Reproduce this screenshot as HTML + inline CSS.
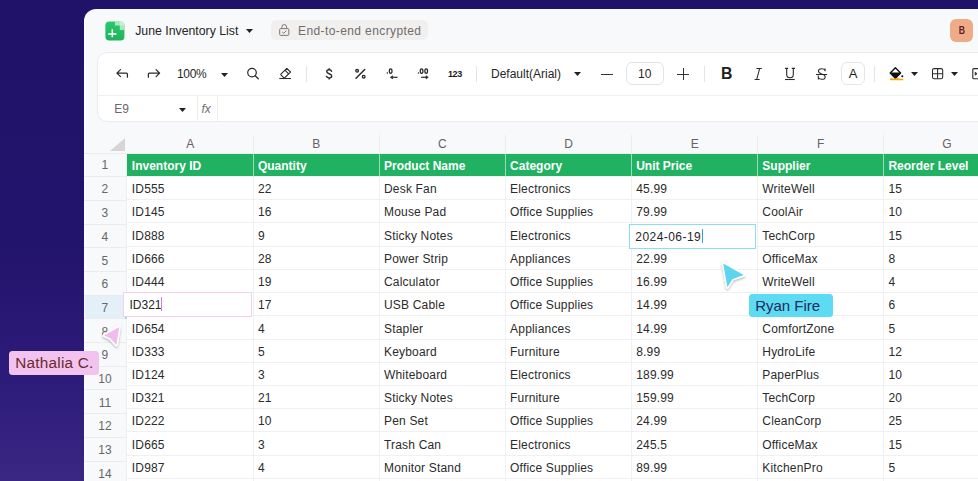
<!DOCTYPE html>
<html><head><meta charset="utf-8"><title>June Inventory List</title>
<style>
html,body{margin:0;padding:0}
body{width:978px;height:481px;overflow:hidden;position:relative;font-family:"Liberation Sans", sans-serif;
background:linear-gradient(180deg,#201268 0%,#22136c 50%,#2d1b79 78%,#3a2784 100%)}
.a,.t{position:absolute}
.t{white-space:nowrap}
#win{position:absolute;left:84px;top:8.8px;width:1000px;height:520px;background:#f8f9fb;border-top-left-radius:12px}
#panel{position:absolute;left:97.2px;top:52.2px;width:1000px;height:69.8px;box-sizing:border-box;background:#fff;border:1px solid #ebebee;border-radius:10px}
</style></head><body>
<div id="win"></div>
<div class="a" style="left:84.6px;top:22px;width:1.8px;height:470px;background:#fdfdfe"></div>
<svg class="a" style="left:105px;top:20.5px" width="20" height="20" viewBox="0 0 20 20">
<defs><linearGradient id="lg" x1="0" y1="0" x2="0" y2="1"><stop offset="0" stop-color="#2cc96c"/><stop offset="1" stop-color="#1fb25e"/></linearGradient></defs>
<rect x="0.4" y="0.5" width="19" height="19" rx="3.8" fill="url(#lg)"/>
<path d="M10 0.5H15.6A3.8 3.8 0 0 1 19.4 4.3V9.1H14.8V4.5H10Z" fill="#c8f0d7" opacity="0.8"/>
<rect x="14.8" y="0.5" width="4.6" height="4" fill="#e9faef" opacity="0.5"/>
<path d="M7.3 8.3v7.9M3.2 12.9h8.2" stroke="#fff" stroke-width="1.5"/>
</svg>
<div class="t" style="left:135.20px;top:20.64px;font-size:12.3px;line-height:20px;font-weight:400;color:#262626;">June Inventory List</div>
<svg class="a" style="left:245.5px;top:29px" width="7" height="4" viewBox="0 0 7 4"><path d="M0 0h7L3.5 4z" fill="#222"/></svg>
<div class="a" style="left:271px;top:20.3px;width:156.5px;height:19.4px;border-radius:5px;background:#f2f0ee"></div>
<svg class="a" style="left:276px;top:22px" width="16" height="16" viewBox="276 22 16 16">
<path d="M281.9 28.6V26.9A2.35 2.35 0 0 1 286.6 26.9V28.6" fill="none" stroke="#7a7a7a" stroke-width="1"/>
<rect x="279.7" y="28.6" width="9.1" height="6.8" rx="0.9" fill="none" stroke="#7a7a7a" stroke-width="1"/>
<path d="M282.1 31.9L283.7 33.3L286.4 30.6" fill="none" stroke="#7a7a7a" stroke-width="1"/>
</svg>
<div class="t" style="left:298.00px;top:20.64px;font-size:12px;line-height:20px;font-weight:400;color:#6e6e6e;letter-spacing:0.4px">End-to-end encrypted</div>
<div class="a" style="left:950.2px;top:18.8px;width:23px;height:23px;border-radius:6px;background:#efab85"></div>
<div class="t" style="left:951.70px;width:20px;text-align:center;top:20.13px;font-size:11px;line-height:20px;font-weight:700;color:#5a1f30;transform:scaleX(0.8)">B</div>
<div id="panel"></div>
<div class="a" style="left:98px;top:95.3px;width:900px;height:1px;background:#efeff1"></div>
<div class="a" style="left:197px;top:96px;width:1px;height:26px;background:#efeff1"></div>
<div class="a" style="left:217px;top:96px;width:1px;height:26px;background:#efeff1"></div>
<svg class="a" style="left:112px;top:63px" width="52" height="21" viewBox="112 63 52 21">
<path d="M120.5 69.6L116.9 73.1L120.5 76.6M116.9 73.1H126.4Q127.4 73.1 127.4 74.1V77.2" fill="none" stroke="#2a2a2a" stroke-width="1.25" stroke-linecap="round" stroke-linejoin="round"/>
<path d="M156.1 69.6L159.6 73.1L156.1 76.6M159.6 73.1H149.4Q148.4 73.1 148.4 74.1V77.2" fill="none" stroke="#2a2a2a" stroke-width="1.25" stroke-linecap="round" stroke-linejoin="round"/></svg>
<div class="t" style="left:177.00px;top:64.14px;font-size:12px;line-height:20px;font-weight:400;color:#262626;letter-spacing:-0.3px">100%</div>
<svg class="a" style="left:220.5px;top:72.5px" width="7" height="4" viewBox="0 0 7 4"><path d="M0 0h7L3.5 4z" fill="#222"/></svg>
<svg class="a" style="left:246px;top:67px" width="14" height="13" viewBox="0 0 14 13">
<circle cx="6" cy="5.6" r="4.3" fill="none" stroke="#2a2a2a" stroke-width="1.2"/><path d="M9.2 8.8L12.3 11.8" stroke="#2a2a2a" stroke-width="1.3" stroke-linecap="round"/></svg>
<svg class="a" style="left:276px;top:64px" width="18" height="18" viewBox="276 64 18 18">
<path d="M286.8 68.3L290.5 72L284.6 77.9Q284.3 78.2 284 77.9L280.9 74.8Q280.6 74.5 280.9 74.2Z" fill="none" stroke="#2a2a2a" stroke-width="1.1" stroke-linejoin="round"/>
<path d="M284.9 70.2L288.6 73.9" stroke="#2a2a2a" stroke-width="1.1"/><path d="M279.3 78.5H290.9" stroke="#2a2a2a" stroke-width="1.1"/></svg>
<div class="a" style="left:306.3px;top:65.5px;width:1px;height:16px;background:#e4e4e6"></div>
<div class="a" style="left:476.1px;top:65.5px;width:1px;height:16px;background:#e4e4e6"></div>
<div class="a" style="left:704.1px;top:65.5px;width:1px;height:16px;background:#e4e4e6"></div>
<div class="a" style="left:874.2px;top:65.5px;width:1px;height:16px;background:#e4e4e6"></div>
<svg class="a" style="left:320px;top:63px" width="50" height="21" viewBox="320 63 50 21">
<path d="M331.6 71.3C331.2 70.2 330.3 69.7 329.1 69.7C327.7 69.7 326.7 70.5 326.7 71.6C326.7 74.5 331.7 73 331.7 76C331.7 77.2 330.6 77.9 329.1 77.9C327.8 77.9 326.8 77.3 326.4 76.3M329.1 68.6V69.7M329.1 77.9V79" fill="none" stroke="#2a2a2a" stroke-width="1.4" stroke-linecap="round"/>
<circle cx="357.1" cy="70.8" r="1.35" fill="none" stroke="#2a2a2a" stroke-width="1.35"/><circle cx="363.7" cy="76.7" r="1.35" fill="none" stroke="#2a2a2a" stroke-width="1.35"/>
<path d="M364.7 69.4L356 78.3" stroke="#2a2a2a" stroke-width="1.45" stroke-linecap="round"/></svg>
<svg class="a" style="left:384px;top:65px" width="50" height="17" viewBox="384 65 50 17">
<circle cx="387.3" cy="73.1" r="0.75" fill="#2a2a2a"/><ellipse cx="390.65" cy="71" rx="1.35" ry="2.25" fill="none" stroke="#2a2a2a" stroke-width="1.25"/>
<path d="M392.2 77.3H397.5" stroke="#2a2a2a" stroke-width="1.2"/><path d="M390.3 77.3L392.6 75.7V78.9Z" fill="#2a2a2a" stroke="#2a2a2a" stroke-width="0.6" stroke-linejoin="round"/>
<circle cx="418.5" cy="73.1" r="0.75" fill="#2a2a2a"/><ellipse cx="421.6" cy="71" rx="1.35" ry="2.25" fill="none" stroke="#2a2a2a" stroke-width="1.25"/><ellipse cx="426.2" cy="71" rx="1.35" ry="2.25" fill="none" stroke="#2a2a2a" stroke-width="1.25"/>
<path d="M421.1 77.3H426.4" stroke="#2a2a2a" stroke-width="1.2"/><path d="M428.3 77.3L426 75.7V78.9Z" fill="#2a2a2a" stroke="#2a2a2a" stroke-width="0.6" stroke-linejoin="round"/></svg>
<div class="t" style="left:448.00px;top:63.90px;font-size:9px;line-height:20px;font-weight:700;color:#1a1a1a;letter-spacing:-0.4px">123</div>
<div class="t" style="left:491.00px;top:63.89px;font-size:12px;line-height:20px;font-weight:400;color:#262626;">Default(Arial)</div>
<svg class="a" style="left:573.5px;top:72px" width="7" height="4" viewBox="0 0 7 4"><path d="M0 0h7L3.5 4z" fill="#222"/></svg>
<div class="a" style="left:600.6px;top:73.8px;width:12px;height:1px;background:#333"></div>
<div class="a" style="left:625.5px;top:62.3px;width:38.3px;height:22.6px;box-sizing:border-box;border:1px solid #e3e3e6;border-radius:6px"></div>
<div class="t" style="left:629.70px;width:30px;text-align:center;top:63.89px;font-size:12px;line-height:20px;font-weight:400;color:#262626;">10</div>
<div class="a" style="left:677.1px;top:73.7px;width:11.9px;height:1px;background:#333"></div>
<div class="a" style="left:682.6px;top:68.2px;width:1px;height:11.9px;background:#333"></div>
<div class="t" style="left:716.80px;width:20px;text-align:center;top:64.08px;font-size:15.8px;line-height:20px;font-weight:700;color:#1e1e1e;">B</div>
<svg class="a" style="left:750px;top:64px" width="16" height="20" viewBox="750 64 16 20">
<path d="M756.4 68.4H761.8M754.6 79.4H759.6M759.7 68.4L756.7 79.4" fill="none" stroke="#2a2a2a" stroke-width="1.05"/></svg>
<svg class="a" style="left:780px;top:64px" width="20" height="20" viewBox="780 64 20 20">
<path d="M786.7 68.4V74.4A3.3 3.3 0 0 0 793.3 74.4V68.4M785 68.4H788.2M791.8 68.4H795" fill="none" stroke="#2a2a2a" stroke-width="1.1"/><path d="M785 79.5H794.7" stroke="#2a2a2a" stroke-width="1.1"/></svg>
<svg class="a" style="left:812px;top:64px" width="18" height="20" viewBox="812 64 18 20">
<path d="M825.1 70.5C824.6 69.3 823.3 68.7 821.7 68.7C819.7 68.7 818.4 69.7 818.4 71.1C818.4 72.6 819.7 73.3 821.7 73.9C824 74.5 825.2 75.3 825.2 76.9C825.2 78.4 823.9 79.3 821.8 79.3C820.1 79.3 818.8 78.6 818.3 77.4M825.1 68.5V71.2M818.3 75.6V79.4" fill="none" stroke="#2a2a2a" stroke-width="1.05"/></svg>
<div class="a" style="left:815.9px;top:73.6px;width:10.9px;height:1px;background:#2a2a2a"></div>
<div class="a" style="left:841px;top:61.5px;width:23.6px;height:23.8px;box-sizing:border-box;border:1px solid #e6e6e8;border-radius:6px"></div>
<div class="t" style="left:843.00px;width:20px;text-align:center;top:64.15px;font-size:13px;line-height:20px;font-weight:400;color:#1e1e1e;">A</div>
<svg class="a" style="left:884px;top:62px" width="24" height="22" viewBox="884 62 24 22">
<path d="M895.4 67.7L900.6 73L895.4 78.3L890.2 73Z" fill="none" stroke="#111" stroke-width="1.35" stroke-linejoin="round"/>
<path d="M890.2 73H900.6L895.4 78.3Z" fill="#111" stroke="#111" stroke-width="1" stroke-linejoin="round"/>
<circle cx="902.3" cy="76.3" r="1.05" fill="#111"/>
<path d="M890 78.6Q891.5 77.8 893 78.4T896 78.3T899 78.4T903.2 78.5V80.2H890Z" fill="#f7a415"/></svg>
<svg class="a" style="left:910.8px;top:71.6px" width="7" height="4" viewBox="0 0 7 4"><path d="M0 0h7L3.5 4z" fill="#222"/></svg>
<svg class="a" style="left:926px;top:62px" width="52" height="22" viewBox="926 62 52 22">
<rect x="932.5" y="68.6" width="10.2" height="10.2" rx="1.7" fill="none" stroke="#2a2a2a" stroke-width="1.05"/><path d="M937.6 68.6V78.8M932.5 73.7H942.7" stroke="#2a2a2a" stroke-width="1.05"/>
<path d="M980 68.6H973.8Q972.8 68.6 972.8 69.6V77.8Q972.8 78.8 973.8 78.8H980" fill="none" stroke="#2a2a2a" stroke-width="1.1"/><path d="M975.2 72.2L977 73.7L975.2 75.2Z" fill="#2a2a2a" stroke="#2a2a2a" stroke-width="0.8"/></svg>
<svg class="a" style="left:951.3px;top:71.8px" width="7" height="4" viewBox="0 0 7 4"><path d="M0 0h7L3.5 4z" fill="#222"/></svg>
<div class="t" style="left:114.30px;top:99.44px;font-size:12px;line-height:20px;font-weight:400;color:#6a6a6a;">E9</div>
<svg class="a" style="left:179.2px;top:107.8px" width="7" height="4" viewBox="0 0 7 4"><path d="M0 0h7L3.5 4z" fill="#222"/></svg>
<div class="t" style="left:201.40px;top:99.44px;font-size:12px;line-height:20px;font-weight:400;color:#707070;font-style:italic">fx</div>
<div class="t" style="left:175.25px;width:30px;text-align:center;top:133.54px;font-size:12px;line-height:20px;font-weight:400;color:#636363;">A</div>
<div class="a" style="left:252.80px;top:135.00px;width:1px;height:18.75px;background:#ececef"></div>
<div class="t" style="left:301.35px;width:30px;text-align:center;top:133.54px;font-size:12px;line-height:20px;font-weight:400;color:#636363;">B</div>
<div class="a" style="left:378.90px;top:135.00px;width:1px;height:18.75px;background:#ececef"></div>
<div class="t" style="left:427.45px;width:30px;text-align:center;top:133.54px;font-size:12px;line-height:20px;font-weight:400;color:#636363;">C</div>
<div class="a" style="left:505.00px;top:135.00px;width:1px;height:18.75px;background:#ececef"></div>
<div class="t" style="left:553.55px;width:30px;text-align:center;top:133.54px;font-size:12px;line-height:20px;font-weight:400;color:#636363;">D</div>
<div class="a" style="left:631.10px;top:135.00px;width:1px;height:18.75px;background:#ececef"></div>
<div class="t" style="left:679.65px;width:30px;text-align:center;top:133.54px;font-size:12px;line-height:20px;font-weight:400;color:#636363;">E</div>
<div class="a" style="left:757.20px;top:135.00px;width:1px;height:18.75px;background:#ececef"></div>
<div class="t" style="left:805.75px;width:30px;text-align:center;top:133.54px;font-size:12px;line-height:20px;font-weight:400;color:#636363;">F</div>
<div class="a" style="left:883.30px;top:135.00px;width:1px;height:18.75px;background:#ececef"></div>
<div class="t" style="left:931.85px;width:30px;text-align:center;top:133.54px;font-size:12px;line-height:20px;font-weight:400;color:#636363;">G</div>
<div class="a" style="left:1009.40px;top:135.00px;width:1px;height:18.75px;background:#ececef"></div>
<div class="a" style="left:84px;top:153.15px;width:900px;height:0.8px;background:#ebebee"></div>
<svg class="a" style="left:110px;top:138px" width="15" height="13" viewBox="0 0 15 13"><path d="M15 0V13H0z" fill="#d6d6d8"/></svg>
<div class="a" style="left:127.20px;top:153.75px;width:900px;height:400px;background:#fff"></div>
<div class="a" style="left:127.20px;top:153.75px;width:900px;height:22.5px;background:#21b163"></div>
<div class="a" style="left:127.20px;top:176.00px;width:900px;height:1px;background:#f0f0f2"></div>
<div class="a" style="left:127.20px;top:199.22px;width:900px;height:1px;background:#f0f0f2"></div>
<div class="a" style="left:127.20px;top:222.44px;width:900px;height:1px;background:#f0f0f2"></div>
<div class="a" style="left:127.20px;top:245.66px;width:900px;height:1px;background:#f0f0f2"></div>
<div class="a" style="left:127.20px;top:268.88px;width:900px;height:1px;background:#f0f0f2"></div>
<div class="a" style="left:127.20px;top:292.10px;width:900px;height:1px;background:#f0f0f2"></div>
<div class="a" style="left:127.20px;top:315.32px;width:900px;height:1px;background:#f0f0f2"></div>
<div class="a" style="left:127.20px;top:338.54px;width:900px;height:1px;background:#f0f0f2"></div>
<div class="a" style="left:127.20px;top:361.76px;width:900px;height:1px;background:#f0f0f2"></div>
<div class="a" style="left:127.20px;top:384.98px;width:900px;height:1px;background:#f0f0f2"></div>
<div class="a" style="left:127.20px;top:408.20px;width:900px;height:1px;background:#f0f0f2"></div>
<div class="a" style="left:127.20px;top:431.42px;width:900px;height:1px;background:#f0f0f2"></div>
<div class="a" style="left:127.20px;top:454.64px;width:900px;height:1px;background:#f0f0f2"></div>
<div class="a" style="left:127.20px;top:477.86px;width:900px;height:1px;background:#f0f0f2"></div>
<div class="a" style="left:252.80px;top:176.25px;width:1px;height:400px;background:#f0f0f2"></div>
<div class="a" style="left:252.80px;top:153.75px;width:1px;height:22.5px;background:rgba(255,255,255,0.55)"></div>
<div class="a" style="left:378.90px;top:176.25px;width:1px;height:400px;background:#f0f0f2"></div>
<div class="a" style="left:378.90px;top:153.75px;width:1px;height:22.5px;background:rgba(255,255,255,0.55)"></div>
<div class="a" style="left:505.00px;top:176.25px;width:1px;height:400px;background:#f0f0f2"></div>
<div class="a" style="left:505.00px;top:153.75px;width:1px;height:22.5px;background:rgba(255,255,255,0.55)"></div>
<div class="a" style="left:631.10px;top:176.25px;width:1px;height:400px;background:#f0f0f2"></div>
<div class="a" style="left:631.10px;top:153.75px;width:1px;height:22.5px;background:rgba(255,255,255,0.55)"></div>
<div class="a" style="left:757.20px;top:176.25px;width:1px;height:400px;background:#f0f0f2"></div>
<div class="a" style="left:757.20px;top:153.75px;width:1px;height:22.5px;background:rgba(255,255,255,0.55)"></div>
<div class="a" style="left:883.30px;top:176.25px;width:1px;height:400px;background:#f0f0f2"></div>
<div class="a" style="left:883.30px;top:153.75px;width:1px;height:22.5px;background:rgba(255,255,255,0.55)"></div>
<div class="t" style="left:131.80px;top:155.89px;font-size:12px;line-height:20px;font-weight:700;color:#ffffff;">Inventory ID</div>
<div class="t" style="left:257.90px;top:155.89px;font-size:12px;line-height:20px;font-weight:700;color:#ffffff;">Quantity</div>
<div class="t" style="left:384.00px;top:155.89px;font-size:12px;line-height:20px;font-weight:700;color:#ffffff;">Product Name</div>
<div class="t" style="left:510.10px;top:155.89px;font-size:12px;line-height:20px;font-weight:700;color:#ffffff;">Category</div>
<div class="t" style="left:636.20px;top:155.89px;font-size:12px;line-height:20px;font-weight:700;color:#ffffff;">Unit Price</div>
<div class="t" style="left:762.30px;top:155.89px;font-size:12px;line-height:20px;font-weight:700;color:#ffffff;">Supplier</div>
<div class="t" style="left:888.40px;top:155.89px;font-size:12px;line-height:20px;font-weight:700;color:#ffffff;">Reorder Level</div>
<div class="t" style="left:131.80px;top:179.24px;font-size:12px;line-height:20px;font-weight:400;color:#2b2b2b;letter-spacing:0.18px">ID555</div>
<div class="t" style="left:257.90px;top:179.24px;font-size:12px;line-height:20px;font-weight:400;color:#2b2b2b;letter-spacing:0.18px">22</div>
<div class="t" style="left:384.00px;top:179.24px;font-size:12px;line-height:20px;font-weight:400;color:#2b2b2b;letter-spacing:0.18px">Desk Fan</div>
<div class="t" style="left:510.10px;top:179.24px;font-size:12px;line-height:20px;font-weight:400;color:#2b2b2b;letter-spacing:0.18px">Electronics</div>
<div class="t" style="left:636.20px;top:179.24px;font-size:12px;line-height:20px;font-weight:400;color:#2b2b2b;letter-spacing:0.18px">45.99</div>
<div class="t" style="left:762.30px;top:179.24px;font-size:12px;line-height:20px;font-weight:400;color:#2b2b2b;letter-spacing:0.18px">WriteWell</div>
<div class="t" style="left:888.40px;top:179.24px;font-size:12px;line-height:20px;font-weight:400;color:#2b2b2b;letter-spacing:0.18px">15</div>
<div class="t" style="left:131.80px;top:202.46px;font-size:12px;line-height:20px;font-weight:400;color:#2b2b2b;letter-spacing:0.18px">ID145</div>
<div class="t" style="left:257.90px;top:202.46px;font-size:12px;line-height:20px;font-weight:400;color:#2b2b2b;letter-spacing:0.18px">16</div>
<div class="t" style="left:384.00px;top:202.46px;font-size:12px;line-height:20px;font-weight:400;color:#2b2b2b;letter-spacing:0.18px">Mouse Pad</div>
<div class="t" style="left:510.10px;top:202.46px;font-size:12px;line-height:20px;font-weight:400;color:#2b2b2b;letter-spacing:0.18px">Office Supplies</div>
<div class="t" style="left:636.20px;top:202.46px;font-size:12px;line-height:20px;font-weight:400;color:#2b2b2b;letter-spacing:0.18px">79.99</div>
<div class="t" style="left:762.30px;top:202.46px;font-size:12px;line-height:20px;font-weight:400;color:#2b2b2b;letter-spacing:0.18px">CoolAir</div>
<div class="t" style="left:888.40px;top:202.46px;font-size:12px;line-height:20px;font-weight:400;color:#2b2b2b;letter-spacing:0.18px">10</div>
<div class="t" style="left:131.80px;top:225.68px;font-size:12px;line-height:20px;font-weight:400;color:#2b2b2b;letter-spacing:0.18px">ID888</div>
<div class="t" style="left:257.90px;top:225.68px;font-size:12px;line-height:20px;font-weight:400;color:#2b2b2b;letter-spacing:0.18px">9</div>
<div class="t" style="left:384.00px;top:225.68px;font-size:12px;line-height:20px;font-weight:400;color:#2b2b2b;letter-spacing:0.18px">Sticky Notes</div>
<div class="t" style="left:510.10px;top:225.68px;font-size:12px;line-height:20px;font-weight:400;color:#2b2b2b;letter-spacing:0.18px">Electronics</div>
<div class="t" style="left:762.30px;top:225.68px;font-size:12px;line-height:20px;font-weight:400;color:#2b2b2b;letter-spacing:0.18px">TechCorp</div>
<div class="t" style="left:888.40px;top:225.68px;font-size:12px;line-height:20px;font-weight:400;color:#2b2b2b;letter-spacing:0.18px">15</div>
<div class="t" style="left:131.80px;top:248.90px;font-size:12px;line-height:20px;font-weight:400;color:#2b2b2b;letter-spacing:0.18px">ID666</div>
<div class="t" style="left:257.90px;top:248.90px;font-size:12px;line-height:20px;font-weight:400;color:#2b2b2b;letter-spacing:0.18px">28</div>
<div class="t" style="left:384.00px;top:248.90px;font-size:12px;line-height:20px;font-weight:400;color:#2b2b2b;letter-spacing:0.18px">Power Strip</div>
<div class="t" style="left:510.10px;top:248.90px;font-size:12px;line-height:20px;font-weight:400;color:#2b2b2b;letter-spacing:0.18px">Appliances</div>
<div class="t" style="left:636.20px;top:248.90px;font-size:12px;line-height:20px;font-weight:400;color:#2b2b2b;letter-spacing:0.18px">22.99</div>
<div class="t" style="left:762.30px;top:248.90px;font-size:12px;line-height:20px;font-weight:400;color:#2b2b2b;letter-spacing:0.18px">OfficeMax</div>
<div class="t" style="left:888.40px;top:248.90px;font-size:12px;line-height:20px;font-weight:400;color:#2b2b2b;letter-spacing:0.18px">8</div>
<div class="t" style="left:131.80px;top:272.12px;font-size:12px;line-height:20px;font-weight:400;color:#2b2b2b;letter-spacing:0.18px">ID444</div>
<div class="t" style="left:257.90px;top:272.12px;font-size:12px;line-height:20px;font-weight:400;color:#2b2b2b;letter-spacing:0.18px">19</div>
<div class="t" style="left:384.00px;top:272.12px;font-size:12px;line-height:20px;font-weight:400;color:#2b2b2b;letter-spacing:0.18px">Calculator</div>
<div class="t" style="left:510.10px;top:272.12px;font-size:12px;line-height:20px;font-weight:400;color:#2b2b2b;letter-spacing:0.18px">Office Supplies</div>
<div class="t" style="left:636.20px;top:272.12px;font-size:12px;line-height:20px;font-weight:400;color:#2b2b2b;letter-spacing:0.18px">16.99</div>
<div class="t" style="left:762.30px;top:272.12px;font-size:12px;line-height:20px;font-weight:400;color:#2b2b2b;letter-spacing:0.18px">WriteWell</div>
<div class="t" style="left:888.40px;top:272.12px;font-size:12px;line-height:20px;font-weight:400;color:#2b2b2b;letter-spacing:0.18px">4</div>
<div class="t" style="left:257.90px;top:295.34px;font-size:12px;line-height:20px;font-weight:400;color:#2b2b2b;letter-spacing:0.18px">17</div>
<div class="t" style="left:384.00px;top:295.34px;font-size:12px;line-height:20px;font-weight:400;color:#2b2b2b;letter-spacing:0.18px">USB Cable</div>
<div class="t" style="left:510.10px;top:295.34px;font-size:12px;line-height:20px;font-weight:400;color:#2b2b2b;letter-spacing:0.18px">Office Supplies</div>
<div class="t" style="left:636.20px;top:295.34px;font-size:12px;line-height:20px;font-weight:400;color:#2b2b2b;letter-spacing:0.18px">14.99</div>
<div class="t" style="left:888.40px;top:295.34px;font-size:12px;line-height:20px;font-weight:400;color:#2b2b2b;letter-spacing:0.18px">6</div>
<div class="t" style="left:131.80px;top:318.56px;font-size:12px;line-height:20px;font-weight:400;color:#2b2b2b;letter-spacing:0.18px">ID654</div>
<div class="t" style="left:257.90px;top:318.56px;font-size:12px;line-height:20px;font-weight:400;color:#2b2b2b;letter-spacing:0.18px">4</div>
<div class="t" style="left:384.00px;top:318.56px;font-size:12px;line-height:20px;font-weight:400;color:#2b2b2b;letter-spacing:0.18px">Stapler</div>
<div class="t" style="left:510.10px;top:318.56px;font-size:12px;line-height:20px;font-weight:400;color:#2b2b2b;letter-spacing:0.18px">Appliances</div>
<div class="t" style="left:636.20px;top:318.56px;font-size:12px;line-height:20px;font-weight:400;color:#2b2b2b;letter-spacing:0.18px">14.99</div>
<div class="t" style="left:762.30px;top:318.56px;font-size:12px;line-height:20px;font-weight:400;color:#2b2b2b;letter-spacing:0.18px">ComfortZone</div>
<div class="t" style="left:888.40px;top:318.56px;font-size:12px;line-height:20px;font-weight:400;color:#2b2b2b;letter-spacing:0.18px">5</div>
<div class="t" style="left:131.80px;top:341.78px;font-size:12px;line-height:20px;font-weight:400;color:#2b2b2b;letter-spacing:0.18px">ID333</div>
<div class="t" style="left:257.90px;top:341.78px;font-size:12px;line-height:20px;font-weight:400;color:#2b2b2b;letter-spacing:0.18px">5</div>
<div class="t" style="left:384.00px;top:341.78px;font-size:12px;line-height:20px;font-weight:400;color:#2b2b2b;letter-spacing:0.18px">Keyboard</div>
<div class="t" style="left:510.10px;top:341.78px;font-size:12px;line-height:20px;font-weight:400;color:#2b2b2b;letter-spacing:0.18px">Furniture</div>
<div class="t" style="left:636.20px;top:341.78px;font-size:12px;line-height:20px;font-weight:400;color:#2b2b2b;letter-spacing:0.18px">8.99</div>
<div class="t" style="left:762.30px;top:341.78px;font-size:12px;line-height:20px;font-weight:400;color:#2b2b2b;letter-spacing:0.18px">HydroLife</div>
<div class="t" style="left:888.40px;top:341.78px;font-size:12px;line-height:20px;font-weight:400;color:#2b2b2b;letter-spacing:0.18px">12</div>
<div class="t" style="left:131.80px;top:365.00px;font-size:12px;line-height:20px;font-weight:400;color:#2b2b2b;letter-spacing:0.18px">ID124</div>
<div class="t" style="left:257.90px;top:365.00px;font-size:12px;line-height:20px;font-weight:400;color:#2b2b2b;letter-spacing:0.18px">3</div>
<div class="t" style="left:384.00px;top:365.00px;font-size:12px;line-height:20px;font-weight:400;color:#2b2b2b;letter-spacing:0.18px">Whiteboard</div>
<div class="t" style="left:510.10px;top:365.00px;font-size:12px;line-height:20px;font-weight:400;color:#2b2b2b;letter-spacing:0.18px">Electronics</div>
<div class="t" style="left:636.20px;top:365.00px;font-size:12px;line-height:20px;font-weight:400;color:#2b2b2b;letter-spacing:0.18px">189.99</div>
<div class="t" style="left:762.30px;top:365.00px;font-size:12px;line-height:20px;font-weight:400;color:#2b2b2b;letter-spacing:0.18px">PaperPlus</div>
<div class="t" style="left:888.40px;top:365.00px;font-size:12px;line-height:20px;font-weight:400;color:#2b2b2b;letter-spacing:0.18px">10</div>
<div class="t" style="left:131.80px;top:388.22px;font-size:12px;line-height:20px;font-weight:400;color:#2b2b2b;letter-spacing:0.18px">ID321</div>
<div class="t" style="left:257.90px;top:388.22px;font-size:12px;line-height:20px;font-weight:400;color:#2b2b2b;letter-spacing:0.18px">21</div>
<div class="t" style="left:384.00px;top:388.22px;font-size:12px;line-height:20px;font-weight:400;color:#2b2b2b;letter-spacing:0.18px">Sticky Notes</div>
<div class="t" style="left:510.10px;top:388.22px;font-size:12px;line-height:20px;font-weight:400;color:#2b2b2b;letter-spacing:0.18px">Furniture</div>
<div class="t" style="left:636.20px;top:388.22px;font-size:12px;line-height:20px;font-weight:400;color:#2b2b2b;letter-spacing:0.18px">159.99</div>
<div class="t" style="left:762.30px;top:388.22px;font-size:12px;line-height:20px;font-weight:400;color:#2b2b2b;letter-spacing:0.18px">TechCorp</div>
<div class="t" style="left:888.40px;top:388.22px;font-size:12px;line-height:20px;font-weight:400;color:#2b2b2b;letter-spacing:0.18px">20</div>
<div class="t" style="left:131.80px;top:411.44px;font-size:12px;line-height:20px;font-weight:400;color:#2b2b2b;letter-spacing:0.18px">ID222</div>
<div class="t" style="left:257.90px;top:411.44px;font-size:12px;line-height:20px;font-weight:400;color:#2b2b2b;letter-spacing:0.18px">10</div>
<div class="t" style="left:384.00px;top:411.44px;font-size:12px;line-height:20px;font-weight:400;color:#2b2b2b;letter-spacing:0.18px">Pen Set</div>
<div class="t" style="left:510.10px;top:411.44px;font-size:12px;line-height:20px;font-weight:400;color:#2b2b2b;letter-spacing:0.18px">Office Supplies</div>
<div class="t" style="left:636.20px;top:411.44px;font-size:12px;line-height:20px;font-weight:400;color:#2b2b2b;letter-spacing:0.18px">24.99</div>
<div class="t" style="left:762.30px;top:411.44px;font-size:12px;line-height:20px;font-weight:400;color:#2b2b2b;letter-spacing:0.18px">CleanCorp</div>
<div class="t" style="left:888.40px;top:411.44px;font-size:12px;line-height:20px;font-weight:400;color:#2b2b2b;letter-spacing:0.18px">25</div>
<div class="t" style="left:131.80px;top:434.66px;font-size:12px;line-height:20px;font-weight:400;color:#2b2b2b;letter-spacing:0.18px">ID665</div>
<div class="t" style="left:257.90px;top:434.66px;font-size:12px;line-height:20px;font-weight:400;color:#2b2b2b;letter-spacing:0.18px">3</div>
<div class="t" style="left:384.00px;top:434.66px;font-size:12px;line-height:20px;font-weight:400;color:#2b2b2b;letter-spacing:0.18px">Trash Can</div>
<div class="t" style="left:510.10px;top:434.66px;font-size:12px;line-height:20px;font-weight:400;color:#2b2b2b;letter-spacing:0.18px">Electronics</div>
<div class="t" style="left:636.20px;top:434.66px;font-size:12px;line-height:20px;font-weight:400;color:#2b2b2b;letter-spacing:0.18px">245.5</div>
<div class="t" style="left:762.30px;top:434.66px;font-size:12px;line-height:20px;font-weight:400;color:#2b2b2b;letter-spacing:0.18px">OfficeMax</div>
<div class="t" style="left:888.40px;top:434.66px;font-size:12px;line-height:20px;font-weight:400;color:#2b2b2b;letter-spacing:0.18px">15</div>
<div class="t" style="left:131.80px;top:457.88px;font-size:12px;line-height:20px;font-weight:400;color:#2b2b2b;letter-spacing:0.18px">ID987</div>
<div class="t" style="left:257.90px;top:457.88px;font-size:12px;line-height:20px;font-weight:400;color:#2b2b2b;letter-spacing:0.18px">4</div>
<div class="t" style="left:384.00px;top:457.88px;font-size:12px;line-height:20px;font-weight:400;color:#2b2b2b;letter-spacing:0.18px">Monitor Stand</div>
<div class="t" style="left:510.10px;top:457.88px;font-size:12px;line-height:20px;font-weight:400;color:#2b2b2b;letter-spacing:0.18px">Office Supplies</div>
<div class="t" style="left:636.20px;top:457.88px;font-size:12px;line-height:20px;font-weight:400;color:#2b2b2b;letter-spacing:0.18px">89.99</div>
<div class="t" style="left:762.30px;top:457.88px;font-size:12px;line-height:20px;font-weight:400;color:#2b2b2b;letter-spacing:0.18px">KitchenPro</div>
<div class="t" style="left:888.40px;top:457.88px;font-size:12px;line-height:20px;font-weight:400;color:#2b2b2b;letter-spacing:0.18px">5</div>
<div class="a" style="left:126.2px;top:153.75px;width:1px;height:400px;background:#eeeef1"></div>
<div class="a" style="left:84.5px;top:295.10px;width:42px;height:23.70px;background:#e3f0f8"></div>
<div class="a" style="left:84px;top:176.10px;width:43px;height:1px;background:#ececef"></div>
<div class="a" style="left:84px;top:199.80px;width:43px;height:1px;background:#ececef"></div>
<div class="a" style="left:84px;top:223.50px;width:43px;height:1px;background:#ececef"></div>
<div class="a" style="left:84px;top:247.20px;width:43px;height:1px;background:#ececef"></div>
<div class="a" style="left:84px;top:270.90px;width:43px;height:1px;background:#ececef"></div>
<div class="a" style="left:84px;top:294.60px;width:43px;height:1px;background:#ececef"></div>
<div class="a" style="left:84px;top:318.30px;width:43px;height:1px;background:#ececef"></div>
<div class="a" style="left:84px;top:342.00px;width:43px;height:1px;background:#ececef"></div>
<div class="a" style="left:84px;top:365.70px;width:43px;height:1px;background:#ececef"></div>
<div class="a" style="left:84px;top:389.40px;width:43px;height:1px;background:#ececef"></div>
<div class="a" style="left:84px;top:413.10px;width:43px;height:1px;background:#ececef"></div>
<div class="a" style="left:84px;top:436.80px;width:43px;height:1px;background:#ececef"></div>
<div class="a" style="left:84px;top:460.50px;width:43px;height:1px;background:#ececef"></div>
<div class="a" style="left:84px;top:484.20px;width:43px;height:1px;background:#ececef"></div>
<div class="t" style="left:89.90px;width:30px;text-align:center;top:155.44px;font-size:12px;line-height:20px;font-weight:400;color:#676767;">1</div>
<div class="t" style="left:89.90px;width:30px;text-align:center;top:179.44px;font-size:12px;line-height:20px;font-weight:400;color:#676767;">2</div>
<div class="t" style="left:89.90px;width:30px;text-align:center;top:203.14px;font-size:12px;line-height:20px;font-weight:400;color:#676767;">3</div>
<div class="t" style="left:89.90px;width:30px;text-align:center;top:226.84px;font-size:12px;line-height:20px;font-weight:400;color:#676767;">4</div>
<div class="t" style="left:89.90px;width:30px;text-align:center;top:250.54px;font-size:12px;line-height:20px;font-weight:400;color:#676767;">5</div>
<div class="t" style="left:89.90px;width:30px;text-align:center;top:274.24px;font-size:12px;line-height:20px;font-weight:400;color:#676767;">6</div>
<div class="t" style="left:89.90px;width:30px;text-align:center;top:297.94px;font-size:12px;line-height:20px;font-weight:400;color:#676767;">7</div>
<div class="t" style="left:89.90px;width:30px;text-align:center;top:321.64px;font-size:12px;line-height:20px;font-weight:400;color:#676767;">8</div>
<div class="t" style="left:89.90px;width:30px;text-align:center;top:345.34px;font-size:12px;line-height:20px;font-weight:400;color:#676767;">9</div>
<div class="t" style="left:89.90px;width:30px;text-align:center;top:369.04px;font-size:12px;line-height:20px;font-weight:400;color:#676767;">10</div>
<div class="t" style="left:89.90px;width:30px;text-align:center;top:392.74px;font-size:12px;line-height:20px;font-weight:400;color:#676767;">11</div>
<div class="t" style="left:89.90px;width:30px;text-align:center;top:416.44px;font-size:12px;line-height:20px;font-weight:400;color:#676767;">12</div>
<div class="t" style="left:89.90px;width:30px;text-align:center;top:440.14px;font-size:12px;line-height:20px;font-weight:400;color:#676767;">13</div>
<div class="t" style="left:89.90px;width:30px;text-align:center;top:463.84px;font-size:12px;line-height:20px;font-weight:400;color:#676767;">14</div>
<div class="a" style="left:629px;top:224px;width:127px;height:24.5px;box-sizing:border-box;border:1.3px solid #8adff3;background:#fff"></div>
<div class="t" style="left:635.30px;top:227.04px;font-size:12px;line-height:20px;font-weight:400;color:#262626;letter-spacing:0.45px">2024-06-19</div>
<div class="a" style="left:702px;top:229px;width:1.2px;height:14px;background:#3aa0d8"></div>
<div class="a" style="left:123.1px;top:292px;width:128.5px;height:25px;box-sizing:border-box;border:1.4px solid #f4cff2;background:#fff"></div>
<div class="t" style="left:129.50px;top:295.34px;font-size:12px;line-height:20px;font-weight:400;color:#262626;">ID321</div>
<div class="a" style="left:160.7px;top:297.3px;width:1.3px;height:14px;background:#cf7fc7"></div>
<div class="a" style="left:124.6px;top:317.2px;width:2px;height:2px;border-radius:1px;background:#7fd8d8"></div>
<svg class="a" style="left:94px;top:318px" width="34" height="34" viewBox="94 318 34 34">
<defs><filter id="sh1" x="-50%" y="-50%" width="200%" height="200%"><feDropShadow dx="0" dy="1.4" stdDeviation="1.2" flood-color="#000" flood-opacity="0.3"/></filter></defs>
<path d="M119.3 326.9L104 335.4L110.6 338.6L116.4 345Z" fill="#f1bbed" stroke="#fff" stroke-width="3" stroke-linejoin="round" paint-order="stroke" filter="url(#sh1)"/></svg>
<svg class="a" style="left:712px;top:254px" width="40" height="40" viewBox="712 254 40 40">
<defs><filter id="sh2" x="-50%" y="-50%" width="200%" height="200%"><feDropShadow dx="0" dy="1.4" stdDeviation="1.2" flood-color="#000" flood-opacity="0.3"/></filter></defs>
<path d="M723.2 263.4L743.8 275L732.4 279.2L727.4 287.2Z" fill="#5dd5ee" stroke="#fff" stroke-width="3" stroke-linejoin="round" paint-order="stroke" filter="url(#sh2)"/></svg>
<div class="a" style="left:9.1px;top:351.1px;width:89.8px;height:23.5px;border-radius:3.5px;background:#f2c3ef"></div>
<div class="t" style="left:15.20px;top:353.38px;font-size:15.3px;line-height:20px;font-weight:400;color:#6c2830;letter-spacing:0.25px">Nathalia C.</div>
<div class="a" style="left:748.9px;top:294.1px;width:84.1px;height:23.1px;border-radius:3.5px;background:#5ddbf2"></div>
<div class="t" style="left:755.20px;top:295.72px;font-size:15px;line-height:20px;font-weight:400;color:#1d2a5a;">Ryan Fire</div>
</body></html>
